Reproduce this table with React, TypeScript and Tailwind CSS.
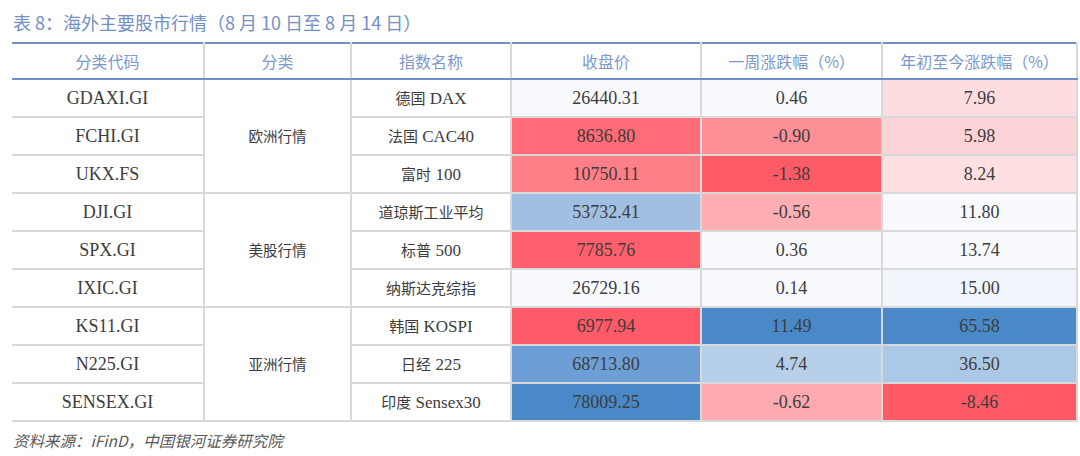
import React from "react";

type Row = {
  code: string;
  name: string;
  close: string;
  week: string;
  ytd: string;
  closeBg: string;
  weekBg: string;
  ytdBg: string;
};

const groups: { label: string; rows: Row[] }[] = [
  {
    label: "欧洲行情",
    rows: [
      { code: "GDAXI.GI", name: "德国 DAX", close: "26440.31", week: "0.46", ytd: "7.96", closeBg: "bg-[#f8f9fd]", weekBg: "bg-[#f8f9fd]", ytdBg: "bg-[#fedde1]" },
      { code: "FCHI.GI", name: "法国 CAC40", close: "8636.80", week: "-0.90", ytd: "5.98", closeBg: "bg-[#ff6b76]", weekBg: "bg-[#ff8f97]", ytdBg: "bg-[#fed3d7]" },
      { code: "UKX.FS", name: "富时 100", close: "10750.11", week: "-1.38", ytd: "8.24", closeBg: "bg-[#ff7f89]", weekBg: "bg-[#ff5b67]", ytdBg: "bg-[#fee0e3]" },
    ],
  },
  {
    label: "美股行情",
    rows: [
      { code: "DJI.GI", name: "道琼斯工业平均", close: "53732.41", week: "-0.56", ytd: "11.80", closeBg: "bg-[#a0bfe3]", weekBg: "bg-[#ffaeb4]", ytdBg: "bg-[#f9fafd]" },
      { code: "SPX.GI", name: "标普 500", close: "7785.76", week: "0.36", ytd: "13.74", closeBg: "bg-[#ff606c]", weekBg: "bg-[#f8f9fd]", ytdBg: "bg-[#f8f9fd]" },
      { code: "IXIC.GI", name: "纳斯达克综指", close: "26729.16", week: "0.14", ytd: "15.00", closeBg: "bg-[#f9fafd]", weekBg: "bg-[#f8f9fd]", ytdBg: "bg-[#f1f5fc]" },
    ],
  },
  {
    label: "亚洲行情",
    rows: [
      { code: "KS11.GI", name: "韩国 KOSPI", close: "6977.94", week: "11.49", ytd: "65.58", closeBg: "bg-[#ff5a67]", weekBg: "bg-[#4a89c8]", ytdBg: "bg-[#4a89c8]" },
      { code: "N225.GI", name: "日经 225", close: "68713.80", week: "4.74", ytd: "36.50", closeBg: "bg-[#6d9fd6]", weekBg: "bg-[#b6d0ea]", ytdBg: "bg-[#abc8e6]" },
      { code: "SENSEX.GI", name: "印度 Sensex30", close: "78009.25", week: "-0.62", ytd: "-8.46", closeBg: "bg-[#4a89c8]", weekBg: "bg-[#ffa9b0]", ytdBg: "bg-[#ff5a66]" },
    ],
  },
];

const headers = ["分类代码", "分类", "指数名称", "收盘价", "一周涨跌幅（%）", "年初至今涨跌幅（%）"];

const serif = "font-['Liberation_Serif','Noto_Sans_CJK_SC',serif]";
const cell = "border-2 border-[#d9d9d9] text-center align-middle p-0";

function IndexName({ name }: { name: string }) {
  const [cn, en] = name.split(" ");
  return (
    <>
      {cn}
      {en && <span className={`${serif} text-[17px]`}> {en}</span>}
    </>
  );
}

export default function App() {
  return (
    <div className="w-[1080px] h-[456px] bg-white font-['Noto_Sans_CJK_SC',sans-serif] text-[#3d3d3d]">
      <div className="pl-[13px] pt-[10px] h-[42px] text-[18px] leading-[24px] text-[#7290c4]">
        表 8：海外主要股市行情（8 月 10 日至 8 月 14 日）
      </div>
      <table className="ml-[12px] w-[1065px] border-collapse table-fixed border-t-2 border-b-2 border-t-[#6f8fc6] border-b-[#7c95c5]">
        <colgroup>
          <col className="w-[192px]" />
          <col className="w-[147px]" />
          <col className="w-[160px]" />
          <col className="w-[190px]" />
          <col className="w-[181px]" />
          <col className="w-[195px]" />
        </colgroup>
        <thead>
          <tr className="h-[36px]">
            {headers.map((h, i) => (
              <th
                key={h}
                className={`border-2 border-[#d9d9d9] border-t-[#6f8fc6] border-b-[#6f8fc6] font-normal text-[16px] text-[#7d98c9] text-center p-0 ${
                  i === 0 ? "border-l-0" : ""
                }`}
              >
                {h}
              </th>
            ))}
          </tr>
        </thead>
        <tbody>
          {groups.map((g) =>
            g.rows.map((r, idx) => (
              <tr key={r.code} className="h-[38px]">
                <td className={`${cell} border-l-0 ${serif} text-[18px]`}>{r.code}</td>
                {idx === 0 && (
                  <td rowSpan={3} className={`${cell} text-[14.5px]`}>
                    {g.label}
                  </td>
                )}
                <td className={`${cell} text-[15px] leading-[20px]`}>
                  <IndexName name={r.name} />
                </td>
                <td className={`${cell} ${serif} text-[18px] ${r.closeBg}`}>{r.close}</td>
                <td className={`${cell} ${serif} text-[18px] ${r.weekBg}`}>{r.week}</td>
                <td className={`${cell} ${serif} text-[18px] ${r.ytdBg}`}>{r.ytd}</td>
              </tr>
            ))
          )}
        </tbody>
      </table>
      <div className="pl-[13px] pt-[7px] text-[15.5px] leading-[22px] italic text-[#595959]">
        资料来源：iFinD，中国银河证券研究院
      </div>
    </div>
  );
}
